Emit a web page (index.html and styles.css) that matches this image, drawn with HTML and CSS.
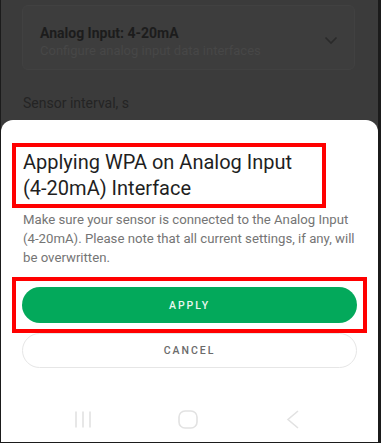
FILE: index.html
```html
<!DOCTYPE html>
<html lang="en">
<head>
<meta charset="utf-8">
<title>Apply WPA</title>
<link rel="stylesheet" href="styles.css">
</head>
<body>
<div class="frame">
  <div class="screen">
    <div class="backdrop">
      <div class="card">
        <div class="card-text">
          <div class="card-title">Analog Input: 4-20mA</div>
          <div class="card-sub">Configure analog input data interfaces</div>
        </div>
        <svg class="chevron" width="14" height="9" viewBox="0 0 14 9"><path d="M1.5 1.5 L7 7 L12.5 1.5" fill="none" stroke="#2a2a2a" stroke-width="1.6"/></svg>
      </div>
      <div class="field-label">Sensor interval, s</div>
    </div>
    <div class="sheet">
      <div class="title-box">
        <h1 class="title">Applying WPA on Analog Input (4-20mA) Interface</h1>
      </div>
      <p class="desc">Make sure your sensor is connected to the Analog Input (4-20mA). Please note that all current settings, if any, will be overwritten.</p>
      <div class="apply-box">
        <button class="btn btn-apply">APPLY</button>
      </div>
      <button class="btn btn-cancel">CANCEL</button>
      <div class="navbar">
        <div class="nav-item">
          <svg width="20" height="19" viewBox="0 0 20 19"><path d="M3 1.5 V17.5 M10 1.5 V17.5 M17 1.5 V17.5" stroke="#e2e2e2" stroke-width="1.6" fill="none"/></svg>
        </div>
        <div class="nav-item">
          <svg width="20" height="19" viewBox="0 0 20 19"><rect x="1" y="1" width="18" height="17" rx="6" ry="6" stroke="#e2e2e2" stroke-width="1.6" fill="none"/></svg>
        </div>
        <div class="nav-item">
          <svg width="20" height="19" viewBox="0 0 20 19"><path d="M15 1 L5 9.5 L15 18" stroke="#e2e2e2" stroke-width="1.6" fill="none"/></svg>
        </div>
      </div>
    </div>
  </div>
</div>
</body>
</html>
```
FILE: styles.css
```css
html, body {
  margin: 0;
  padding: 0;
  background: #3b3b3b;
}

.frame {
  width: 381px;
  height: 443px;
  box-sizing: border-box;
  border-left: 1px solid #1b1b1b;
  border-right: 3px solid #1b1b1b;
  border-bottom: 1px solid #1b1b1b;
  background: #3b3b3b;
  font-family: Roboto, "Liberation Sans", sans-serif;
}

.screen {
  height: 100%;
  display: flex;
  flex-direction: column;
}

.backdrop {
  height: 120px;
  flex: none;
  box-sizing: border-box;
  padding-top: 5px;
}

.card {
  margin: 0 23px 0 21px;
  height: 65px;
  box-sizing: border-box;
  padding: 18px 16px 0 17px;
  background: #3d3d3d;
  border: 1px solid #414141;
  border-radius: 6px;
  display: flex;
  align-items: flex-start;
  justify-content: space-between;
}

.card-title {
  font-size: 14px;
  font-weight: 700;
  line-height: 18px;
  color: #1c1c1c;
}

.card-sub {
  font-size: 13px;
  line-height: 17px;
  color: #474747;
}

.chevron {
  margin-top: 12px;
}

.field-label {
  margin: 24px 0 0 22px;
  font-size: 14px;
  line-height: 18px;
  color: #242424;
}

.sheet {
  flex: 1;
  background: #ffffff;
  border-radius: 12px 12px 0 0;
  padding: 23px 21px 0 21px;
  display: flex;
  flex-direction: column;
}

.title-box {
  margin-left: -10px;
  width: 314px;
  box-sizing: border-box;
  border: 4px solid #ff0000;
  padding: 2px 4px 3px 7px;
}

.title {
  margin: 0;
  font-size: 20px;
  font-weight: 400;
  line-height: 26px;
  color: #1f1f1f;
}

.desc {
  margin: 2px 0 0 0;
  padding-left: 1px;
  font-size: 13.2px;
  line-height: 19px;
  color: #757575;
}

.apply-box {
  margin: 10px -10px 0 -10px;
  border: 4px solid #ff0000;
  padding: 6px;
}

.btn {
  display: block;
  width: 100%;
  border-radius: 18px;
  font-family: Roboto, "Liberation Sans", sans-serif;
  font-size: 10.5px;
  font-weight: 500;
  letter-spacing: 2px;
  cursor: pointer;
  box-sizing: border-box;
}

.btn-apply {
  height: 36px;
  border: none;
  background: #03a95b;
  color: #eaf7ef;
}

.btn-cancel {
  height: 35px;
  border: 1px solid #e6e6e6;
  background: #ffffff;
  color: #6b6b6b;
}

.navbar {
  margin-top: 42px;
  padding-right: 4px;
  display: flex;
  justify-content: center;
}

.nav-item {
  width: 105px;
  display: flex;
  justify-content: center;
}

.nav-item svg {
  display: block;
}
```
